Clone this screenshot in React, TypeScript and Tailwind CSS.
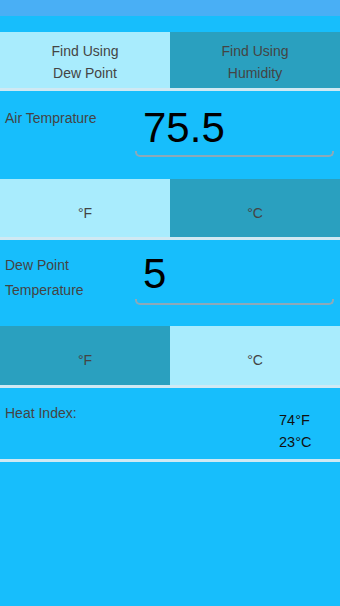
import React from "react";

const Line = () => <div className="h-[3px] bg-[#cfe9f3]" />;

function UnitRow({ fActive }: { fActive: boolean }) {
  const light = "bg-[#a9ecfd]";
  const dark = "bg-[#2aa0bf]";
  return (
    <div className="grid grid-cols-2 h-[58px] text-[14px] text-[#444]">
      <div className={`flex items-center justify-center pt-[10px] ${fActive ? light : dark}`}>°F</div>
      <div className={`flex items-center justify-center pt-[10px] ${fActive ? dark : light}`}>°C</div>
    </div>
  );
}

function Field({ value, pt, mt }: { value: string; pt: string; mt: string }) {
  return (
    <div className={`w-[199px] flex flex-col ${pt}`}>
      <div className="pl-2 text-[42px] leading-[42px] text-black">{value}</div>
      <div className={`h-[6px] border-x-2 border-b-2 border-[#8da9b8] rounded-b-[5px] ${mt}`} />
    </div>
  );
}

export default function App() {
  return (
    <div
      className="w-[340px] h-[606px] bg-[#17befc] flex flex-col overflow-hidden"
      style={{ fontFamily: '"Liberation Sans", Arial, sans-serif' }}
    >
      <div className="h-4 bg-[#49aff5]" />
      <div className="h-4" />
      <div className="grid grid-cols-2 h-[56px] text-[14px] leading-[22px] text-[#444]">
        <div className="bg-[#a9ecfd] flex flex-col items-center justify-center pt-[4px]">
          <span>Find Using</span>
          <span>Dew Point</span>
        </div>
        <div className="bg-[#2aa0bf] flex flex-col items-center justify-center pt-[4px]">
          <span>Find Using</span>
          <span>Humidity</span>
        </div>
      </div>
      <Line />
      <div className="h-[88px] flex">
        <div className="w-[135px] pl-[5px] pt-[18px] text-[14px] leading-[18px] text-[#444]">
          Air Temprature
        </div>
        <Field value="75.5" pt="pt-[16px]" mt="mt-[2px]" />
      </div>
      <UnitRow fActive={true} />
      <Line />
      <div className="h-[86px] flex">
        <div className="w-[135px] pl-[5px] pt-[13px] text-[14px] leading-[25px] text-[#444]">
          Dew Point
          <br />
          Temperature
        </div>
        <Field value="5" pt="pt-[13px]" mt="mt-[4px]" />
      </div>
      <div className="h-[59px] grid grid-cols-2 text-[14px] text-[#444]">
        <div className="flex items-center justify-center pt-[10px] bg-[#2aa0bf]">°F</div>
        <div className="flex items-center justify-center pt-[10px] bg-[#a9ecfd]">°C</div>
      </div>
      <Line />
      <div className="h-[71px] flex">
        <div className="w-[274px] pl-[5px] pt-[16px] text-[14px] leading-[18px] text-[#444]">
          Heat Index:
        </div>
        <div className="pl-[5px] pt-[21px] text-[14.5px] leading-[22px] text-[#111]">
          <div>74°F</div>
          <div>23°C</div>
        </div>
      </div>
      <Line />
    </div>
  );
}
